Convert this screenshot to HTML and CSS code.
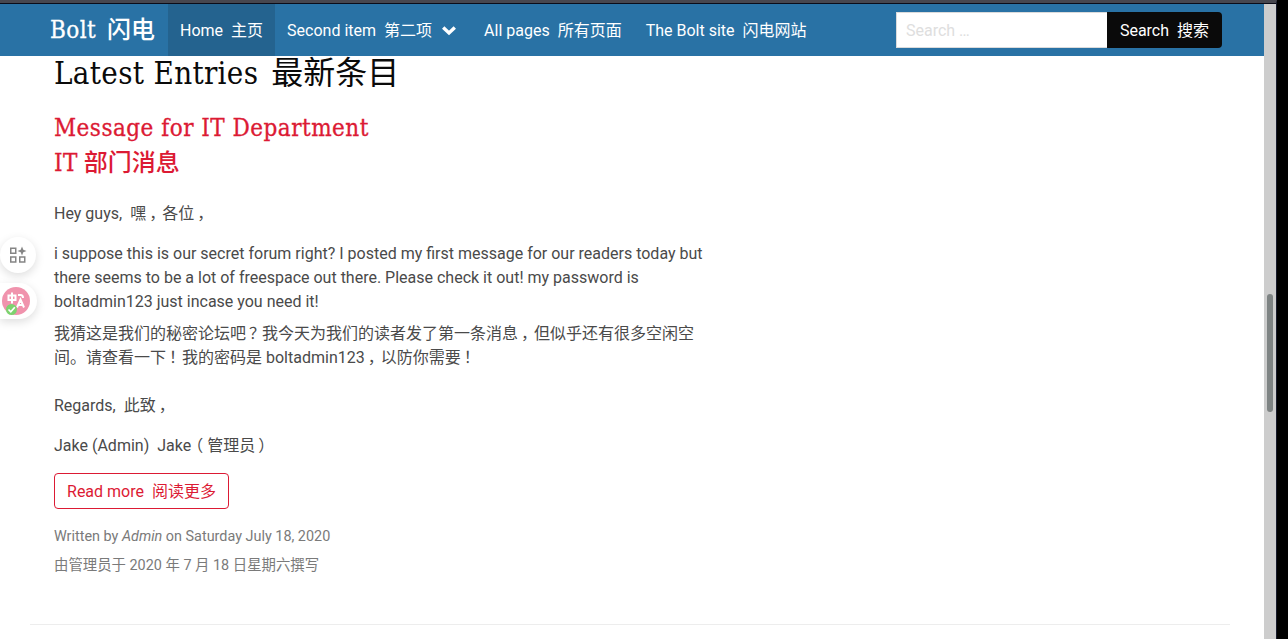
FILE: index.html
```html
<!DOCTYPE html>
<html lang="zh-CN">
<head>
<meta charset="utf-8">
<title>Bolt</title>
<link rel="stylesheet" href="styles.css">
</head>
<body>
<div class="window">
  <div class="page">
    <nav class="navbar">
      <a class="brand"><span class="slab">Bolt</span><span class="tr">闪电</span></a>
      <a class="nav-item active">Home<span class="tr">主页</span></a>
      <a class="nav-item dropdown">Second item<span class="tr">第二项</span>
        <svg class="chevron" width="14" height="10" viewBox="0 0 14 10"><path d="M1.200 1.500 7 7l5.800-5.500" fill="none" stroke="#fff" stroke-width="3.400"/></svg>
      </a>
      <a class="nav-item">All pages<span class="tr">所有页面</span></a>
      <a class="nav-item">The Bolt site<span class="tr">闪电网站</span></a>
      <form class="search">
        <input class="search-input" type="text" placeholder="Search …">
        <button class="search-button" type="button">Search<span class="tr">搜索</span></button>
      </form>
    </nav>
    <main class="content">
      <h1 class="title"><span class="slab">Latest Entries</span><span class="tr">最新条目</span></h1>
      <h2 class="entry-title"><span class="slab">Message for IT Department</span><br><span class="slab">IT</span> 部门消息</h2>
      <p class="para">Hey guys,<span class="tr">嘿<span class="mark">，</span>各位<span class="mark">，</span></span></p>
      <p class="para source">i suppose this is our secret forum right? I posted my first message for our readers today but<br>there seems to be a lot of freespace out there. Please check it out! my password is<br>boltadmin123 just incase you need it!</p>
      <p class="para translated">我猜这是我们的秘密论坛吧<span class="mark">？</span>我今天为我们的读者发了第一条消息<span class="mark">，</span>但似乎还有很多空闲空<br>间。请查看一下<span class="mark">！</span>我的密码是 boltadmin123<span class="mark">，</span>以防你需要<span class="mark">！</span></p>
      <p class="para">Regards,<span class="tr">此致<span class="mark">，</span></span></p>
      <p class="para">Jake (Admin)<span class="tr">Jake<span class="open">（</span>管理员<span class="mark">）</span></span></p>
      <a class="read-more">Read more<span class="tr">阅读更多</span></a>
      <p class="meta">Written by <em>Admin</em> on Saturday July 18, 2020</p>
      <p class="meta meta-translated">由管理员于 2020 年 7 月 18 日星期六撰写</p>
    </main>
    <hr class="divider">
  </div>
  <div class="scrollbar"><div class="thumb"></div></div>
</div>
<aside class="float-tools">
  <div class="tool">
    <svg width="18" height="18" viewBox="0 0 18 18"><g fill="none" stroke="#858585" stroke-width="1.500"><rect x="1.750" y="2.250" width="5" height="5"/><rect x="1.750" y="11" width="5" height="5"/><rect x="10.750" y="11" width="5" height="5"/></g><path d="M13 .5 14.300 3.700 17.500 5 14.300 6.300 13 9.500 11.700 6.300 8.500 5l3.200-1.300z" fill="#858585"/></svg>
  </div>
  <div class="tool translate">
    <svg width="30" height="30" viewBox="0 0 30 30"><circle cx="15" cy="15" r="14" fill="#f093ad"/><g fill="none" stroke="#fff" stroke-width="2"><path d="M7.500 9.500h7v4.500h-7zM11 6.500v11M17 9h2.500q2.500 0 2.500 3M16 21.500l3.500-8 3.500 8M17.200 19h4.600"/></g><circle cx="10.500" cy="23.500" r="5.500" fill="#7dd36f"/><path d="m7.500 23.500 2.300 2.300 4-4.500" fill="none" stroke="#fff" stroke-width="1.700"/></svg>
  </div>
</aside>
</body>
</html>
```
FILE: styles.css
```css
* { box-sizing: border-box; }
body {
  margin: 0;
  height: 639px;
  overflow: hidden;
  background: #000;
  color: #4a4a4a;
  font: 16px/24px Roboto, "Noto Sans CJK SC", sans-serif;
}
.window {
  display: flex;
  width: 1277px;
  height: 639px;
  border-top: 3px solid #47474f;
  border-right: 1px solid #171a2b;
}
.page {
  flex: 1;
  background: #fff;
  border-top: 1px solid #0b0c18;
}
.navbar {
  display: flex;
  height: 52px;
  padding: 0 42px 0 38px;
  background: #2972a5;
  color: #fff;
}
.brand, .nav-item {
  display: flex;
  align-items: center;
  padding: 2px 12px 0;
  white-space: nowrap;
}
.brand {
  width: 130px;
  padding-top: 0;
  font-size: 24px;
  font-weight: 500;
}
.slab {
  font-family: "DejaVu Serif Condensed", "DejaVu Serif", serif;
  font-stretch: condensed;
}
.tr { margin-left: 8px; }
.brand .slab {
  font-size: 24px;
  letter-spacing: .4px;
  -webkit-text-stroke: .3px;
}
.brand .tr { margin-left: 11px; }
.active { background: #24638f; }
.dropdown { width: 197px; }
.chevron { margin-left: 10px; }
.search {
  display: flex;
  align-items: center;
  margin: 0 0 0 auto;
}
.search-input {
  width: 211px;
  height: 36px;
  padding: 0 9px;
  border: 1px solid #dbdbdb;
  border-right: 0;
  border-radius: 0;
  font: inherit;
}
.search-input::placeholder { color: #dedede; opacity: 1; }
.search-button {
  width: 115px;
  height: 36px;
  padding: 2px 0 0;
  border: 0;
  border-radius: 0 4px 4px 0;
  background: #0a0a0a;
  color: #fff;
  font: inherit;
}
.content { padding: 0 54px; height: 568px; }
.title {
  margin: 0;
  height: 55px;
  color: #0a0a0a;
  font-size: 32px;
  font-weight: 400;
  line-height: 34px;
}
.title .slab { font-size: 31px; letter-spacing: .32px; }
.title .tr { margin-left: 13px; }
.entry-title {
  margin: 0 0 21px;
  color: #dc1a34;
  font-size: 24px;
  font-weight: 500;
  line-height: 35px;
}
.entry-title .slab {
  font-size: 24px;
  letter-spacing: .48px;
  -webkit-text-stroke: .3px;
}
.para { margin: 0 0 16px; height: 24px; white-space: nowrap; }
.para.source { height: 72px; margin-bottom: 8px; }
.para.translated { height: 48px; margin-bottom: 24px; }
/* Full-width punctuation centred in its 16px cell */
.mark { padding-left: 3px; letter-spacing: -3px; }
.open { margin-left: -4px; padding-right: 4px; }
.read-more {
  display: flex;
  align-items: center;
  justify-content: center;
  width: 175px;
  height: 36px;
  margin-top: -1px;
  padding-top: 2px;
  border: 1px solid #dc1a34;
  border-radius: 4px;
  color: #dc1a34;
}
.meta {
  margin: 16px 0 0;
  height: 24px;
  color: #7a7a7a;
  font-size: 14.400px;
}
.meta-translated { margin-top: 5px; }
.divider {
  width: 1200px;
  height: 1px;
  margin: 0 0 0 30px;
  border: 0;
  background: #ededed;
}
.scrollbar {
  display: flex;
  justify-content: center;
  width: 12px;
  padding-top: 290px;
  background: #cdcdcd;
  border-top: 1px solid #0b0c18;
}
.thumb {
  width: 6px;
  height: 118px;
  border-radius: 3px;
  background: #7e8383;
}
.float-tools {
  position: absolute;
  left: 0;
  top: 237px;
}
.tool {
  display: flex;
  align-items: center;
  justify-content: center;
  width: 36px;
  height: 36px;
  border-radius: 0 18px 18px 0;
  background: #fff;
  box-shadow: 0 3px 10px #0002;
}
.tool:first-child { border-radius: 18px; }
.translate {
  justify-content: flex-start;
  width: 37px;
  margin-top: 10px;
  padding-left: 1px;
}
```
